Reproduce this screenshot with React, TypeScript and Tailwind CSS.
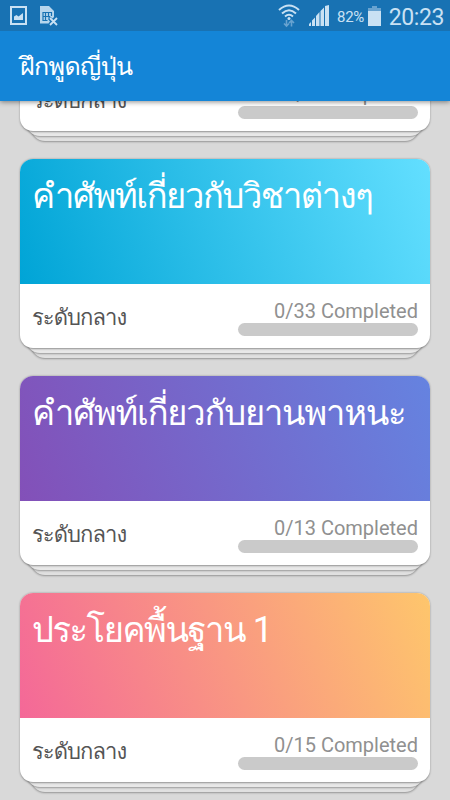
interface Deck {
  id: number;
  title: string;
  part?: number;
  level: string;
  done: number;
  total: number;
  cover: string;
  tracking: string;
}

const decks: Deck[] = [
  {
    id: 1,
    title: '',
    level: 'ระดับกลาง',
    done: 0,
    total: 9,
    cover: 'bg-[#f56b95]',
    tracking: 'tracking-[-1.2px]',
  },
  {
    id: 2,
    title: 'คำศัพท์เกี่ยวกับวิชาต่างๆ',
    level: 'ระดับกลาง',
    done: 0,
    total: 33,
    cover: 'bg-[linear-gradient(70deg,#00a4d6,#63dfff)]',
    tracking: 'tracking-[-1.4px]',
  },
  {
    id: 3,
    title: 'คำศัพท์เกี่ยวกับยานพาหนะ',
    level: 'ระดับกลาง',
    done: 0,
    total: 13,
    cover: 'bg-[linear-gradient(70deg,#8350b8,#6583e0)]',
    tracking: 'tracking-[-1.2px]',
  },
  {
    id: 4,
    title: 'ประโยคพื้นฐาน',
    part: 1,
    level: 'ระดับกลาง',
    done: 0,
    total: 15,
    cover: 'bg-[linear-gradient(70deg,#f46898,#fec66c)]',
    tracking: 'tracking-[-1.45px]',
  },
];

function StatusBar() {
  return (
    <div className="flex h-[31px] items-center bg-[#1872b3] text-[#c9e1f3]">
      <svg className="ml-[10px] h-[19px] w-[17px]" viewBox="0 0 17 19">
        <path d="M0 0h17v19H0zM2 2v15h13V2z" fill="currentColor" fillRule="evenodd" />
        <path d="M4 14v-3.500l2.500-1.500 2 1.500L13 7v7z" fill="currentColor" />
      </svg>
      <svg className="ml-[13px] h-5 w-[18px]" viewBox="0 0 18 20">
        <path d="M0 0h9l5 5v6l-1.500 1.500L10 10.500 8 13l2 2.500-1.500 2H0z" fill="currentColor" opacity=".9" />
        <path d="M3 6.500h8.500V10M3 6v8.500h4.500M3 10.500h7M5.500 6.500v8M8.500 6.500v5" fill="none" stroke="#1872b3" strokeWidth="1.200" />
        <path d="M10 12l7 7M17 12l-7 7" stroke="currentColor" strokeWidth="1.800" />
      </svg>
      <svg className="ml-auto h-[24px] w-[22px]" viewBox="0 0 22 24" fill="none" stroke="currentColor" strokeWidth="2">
        <path d="M1 6Q11-3 21 6M4 9.500Q11 3 18 9.500M7 12.500Q11 9 15 12.500" />
        <circle cx="11" cy="14.500" r="1.500" fill="currentColor" stroke="none" />
        <path d="M8.500 16v6M6 19.500l2.500 2.500 2.500-2.500M13.500 22.500v-6M11 19l2.500-2.500L16 19" opacity=".45" strokeWidth="1.600" />
      </svg>
      <svg className="ml-[9px] h-[21px] w-[20px]" viewBox="0 0 20 21" fill="currentColor">
        <path d="M16 1l4-1v21h-4zM11.500 6L15 2.500V21h-3.500zM7 11l3.500-4v14H7zM3 15.500l3-3V21H3zM0 19l2-2v4H0z" />
      </svg>
      <span className="ml-[8px] mt-[3px] w-[28px] whitespace-nowrap text-[15px] leading-none tracking-[-0.3px]">82%</span>
      <svg className="ml-[3px] h-[20px] w-[13px]" viewBox="0 0 13 20" fill="currentColor">
        <path d="M4 0h5v2h4v3H0V2h4z" opacity=".45" />
        <path d="M0 5h13v15H0z" />
      </svg>
      <span className="ml-[7px] mr-[6px] mt-[3px] w-[56px] whitespace-nowrap text-right text-[23px] leading-none tracking-[-0.4px]">20:23</span>
    </div>
  );
}

function DeckCard({ deck }: { deck: Deck }) {
  return (
    <div className="relative h-[200px] w-full">
      {/* lower sheets of the pile */}
      <div className="absolute inset-x-[11px] bottom-[1px] h-12 rounded-b-[14px] bg-[#e0e0e0] shadow-[0_1px_2px_rgba(0,0,0,0.32)]" />
      <div className="absolute inset-x-[6px] bottom-[6px] h-12 rounded-b-[14px] bg-[#e8e8e8] shadow-[0_1px_2px_rgba(0,0,0,0.32)]" />
      <div className="relative flex h-[189px] flex-col overflow-hidden rounded-[13px] bg-white shadow-[0_0.5px_2px_rgba(0,0,0,0.38)]">
        <div className={`h-[125px] px-3 pt-[10px] text-white ${deck.cover}`}>
          <h2 className={`whitespace-nowrap text-[34.5px] leading-[54px] ${deck.tracking}`}>
            {deck.title}
            {deck.part && <span className="text-[36px] leading-none"> {deck.part}</span>}
          </h2>
        </div>
        <div className="flex flex-1 justify-between px-3">
          <span className="mt-[18px] text-[22px] leading-[32px] tracking-[-0.95px] text-[#555]">{deck.level}</span>
          <div className="flex w-[180px] flex-col items-end">
            <span className="mt-[15px] whitespace-nowrap text-[20px] leading-[24px] text-[#909090]">
              {deck.done}/{deck.total} Completed
            </span>
            <div className="h-[13px] w-full rounded-full bg-[#cacaca]" />
          </div>
        </div>
      </div>
    </div>
  );
}

export default function App() {
  return (
    <div className="flex h-[800px] w-[450px] flex-col overflow-hidden bg-[#d9d9d9] font-['Roboto','Loma',serif]">
      <header className="relative z-10 bg-[#1485d7] shadow-[0_1px_5px_rgba(0,0,0,0.45)]">
        <StatusBar />
        <div className="flex h-[70px] items-center px-5">
          <h1 className="whitespace-nowrap text-[25px] leading-none tracking-[-0.6px] text-white">ฝึกพูดญี่ปุ่น</h1>
        </div>
      </header>
      <main className="min-h-0 flex-1 overflow-hidden px-5">
        <div className="-mt-[159px] flex flex-col gap-[17px]">
          {decks.map((deck) => (
            <DeckCard key={deck.id} deck={deck} />
          ))}
        </div>
      </main>
    </div>
  );
}
